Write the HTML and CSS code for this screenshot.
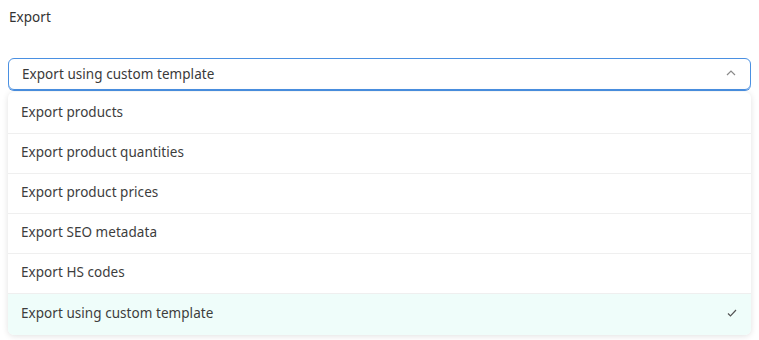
FILE: index.html
```html
<!DOCTYPE html>
<html>
<head>
<meta charset="utf-8">
<link rel="stylesheet" href="styles.css">
</head>
<body>
<div class="field">
  <div class="label">Export</div>
  <div class="select">
    <span class="value">Export using custom template</span>
    <svg class="chev" width="10" height="6" viewBox="0 0 10 6"><path d="M1 5 L5 1 L9 5" fill="none" stroke="#8a8a8a" stroke-width="1.2"/></svg>
  </div>
  <ul class="menu">
    <li class="item">Export products</li>
    <li class="item">Export product quantities</li>
    <li class="item">Export product prices</li>
    <li class="item">Export SEO metadata</li>
    <li class="item">Export HS codes</li>
    <li class="item selected">Export using custom template
      <svg class="check" width="10" height="8" viewBox="0 0 10 8"><path d="M1 4.5 L3.5 7 L9 1" fill="none" stroke="#555" stroke-width="1.2"/></svg>
    </li>
  </ul>
</div>
</body>
</html>
```
FILE: styles.css
```css
html, body { margin: 0; padding: 0; background: #fff; }
body { padding: 8px; font-family: "Noto Sans", "Liberation Sans", sans-serif; color: #3d3d3d; font-size: 13.5px; letter-spacing: 0.05px; }
.field { display: flex; flex-direction: column; }
.label { height: 18px; line-height: 18px; margin-top: 0; padding-left: 1px; color: #333; }
.select {
  margin-top: 32px;
  height: 30px;
  border: 1px solid #4a90e2;
  box-shadow: 0 1px 0 #4a90e2;
  border-radius: 6px;
  display: flex; align-items: center; justify-content: space-between;
  padding: 0 14px 0 13px;
  color: #3a3a3a;
}
.value { margin-top: -1px; }
.chev { margin-top: -2px; }
.menu {
  list-style: none; margin: 2px 0 0 0; padding: 2px 0 0 0;
  background: #fff; border-radius: 6px;
  box-shadow: 0 1px 6px rgba(0,0,0,0.12);
  overflow: hidden;
}
.item {
  box-sizing: border-box; height: 40px;
  border-bottom: 1px solid #efefef;
  display: flex; align-items: center; justify-content: space-between;
  padding: 0 14px 3px 13px;
}
.item:last-child { border-bottom: none; height: 41px; }
.selected { background: #effdfa; }
```
